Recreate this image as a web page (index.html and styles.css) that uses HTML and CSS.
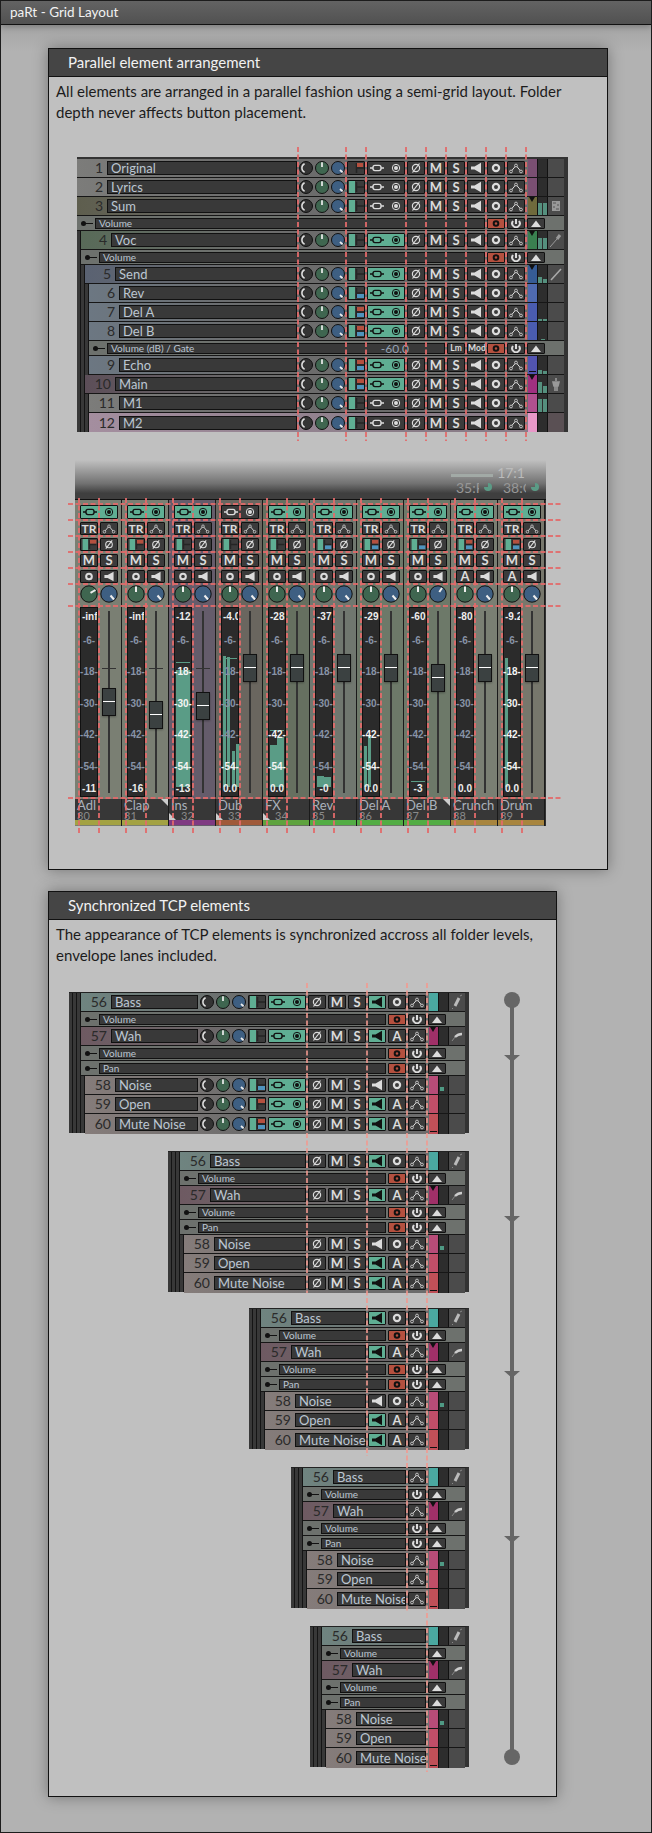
FILE: index.html
```
<!DOCTYPE html>
<html lang="en">
<head>
<meta charset="utf-8">
<title>paRt - Grid Layout</title>
<link rel="stylesheet" href="styles.css">
</head>
<body>
<svg class="defs" aria-hidden="true">
<symbol id="ks" viewBox="0 0 46 14"><circle cx="7" cy="7" r="6.5" fill="#343434" stroke="#111"/><path d="M5.6 2.8A4.6 4.6 0 0 0 5.6 11.2" fill="none" stroke="#ddd" stroke-width="1.5"/><circle cx="23" cy="7" r="6.5" fill="#3f6650" stroke="#111"/><path d="M23 1.2V6" stroke="#eee" stroke-width="1.7"/><circle cx="39" cy="7" r="6.5" fill="#3e5f82" stroke="#111"/><path d="M41 9L43.6 11.4" stroke="#eee" stroke-width="1.8"/></symbol>
<symbol id="kg" viewBox="0 0 18 18"><circle cx="9" cy="9" r="8.2" fill="#3f6650" stroke="#111"/><path d="M9 1.5V7" stroke="#eee" stroke-width="2"/></symbol>
<symbol id="kr" viewBox="0 0 18 18"><circle cx="9" cy="9" r="8.2" fill="#3f6650" stroke="#111"/><path d="M10.5 7.8L15.5 5" stroke="#eee" stroke-width="2"/></symbol>
<symbol id="kb" viewBox="0 0 18 18"><circle cx="9" cy="9" r="8.2" fill="#3e5f82" stroke="#111"/><path d="M10.5 10.5L14 14.5" stroke="#eee" stroke-width="2"/></symbol>
<symbol id="ku" viewBox="0 0 18 18"><circle cx="9" cy="9" r="8.2" fill="#3e5f82" stroke="#111"/><path d="M10.3 7L13 3" stroke="#eee" stroke-width="2"/></symbol>
<symbol id="ph" viewBox="0 0 16 12"><circle cx="8" cy="6" r="3.6" fill="none" stroke="currentColor" stroke-width="1.2"/><path d="M4.5 10.5L11.5 1.5" stroke="currentColor" stroke-width="1.2"/></symbol>
<symbol id="mo" viewBox="0 0 16 12"><path d="M3 4.4H6.5L13 .8V11.2L6.5 7.6H3Z" fill="currentColor"/></symbol>
<symbol id="ring" viewBox="0 0 16 12"><circle cx="8" cy="6" r="3.1" fill="none" stroke="currentColor" stroke-width="2.2"/></symbol>
<symbol id="ev" viewBox="0 0 16 12"><path d="M3 9.5L8 3.5L13 9.5" fill="none" stroke="currentColor"/><circle cx="3" cy="9.5" r="1.4" fill="#3b3b3b" stroke="currentColor" stroke-width=".8"/><circle cx="8" cy="3.5" r="1.4" fill="#3b3b3b" stroke="currentColor" stroke-width=".8"/><circle cx="13" cy="9.5" r="1.4" fill="#3b3b3b" stroke="currentColor" stroke-width=".8"/></symbol>
<symbol id="io" viewBox="0 0 36 12"><path d="M2 6H5M13 6H16" stroke="currentColor" stroke-width="1.4"/><rect x="5" y="3.4" width="8" height="5.2" rx="2" fill="none" stroke="currentColor" stroke-width="1.4"/><circle cx="28" cy="6" r="3.7" fill="none" stroke="currentColor"/><circle cx="28" cy="6" r="2" fill="currentColor"/></symbol>
<symbol id="r0" viewBox="0 0 16 12"><path d="M8 6H16M8.5 1V11" stroke="#252525" stroke-width="1.6"/><rect x="9" y="1" width="6" height="4" fill="#b4503f"/></symbol>
<symbol id="r1" viewBox="0 0 16 12"><rect x="1" y="0" width="6" height="12" fill="#5fae93"/><path d="M8 6H16M8.5 1V11" stroke="#252525" stroke-width="1.6"/></symbol>
<symbol id="r2" viewBox="0 0 16 12"><rect x="1" y="0" width="6" height="12" fill="#5fae93"/><path d="M8 6H16M8.5 1V11" stroke="#252525" stroke-width="1.6"/><rect x="9" y="7" width="7" height="4" fill="#4f93bd"/></symbol>
<symbol id="r3" viewBox="0 0 16 12"><rect x="1" y="0" width="6" height="12" fill="#5fae93"/><path d="M8 6H16M8.5 1V11" stroke="#252525" stroke-width="1.6"/><rect x="9" y="1" width="7" height="4" fill="#b4503f"/></symbol>
<symbol id="r4" viewBox="0 0 16 12"><rect x="1" y="0" width="6" height="12" fill="#5fae93"/><path d="M8 6H16M8.5 1V11" stroke="#252525" stroke-width="1.6"/><rect x="9" y="1" width="7" height="4" fill="#b4503f"/><rect x="9" y="7" width="7" height="4" fill="#4f93bd"/></symbol>
<symbol id="ro" viewBox="0 0 16 9"><circle cx="8" cy="4.5" r="2.3" fill="none" stroke="#111" stroke-width="2"/></symbol>
<symbol id="pw" viewBox="0 0 16 9"><path d="M5 2A3.8 3.8 0 1 0 11 2" fill="none" stroke="currentColor" stroke-width="2"/><path d="M8 0V5" stroke="currentColor" stroke-width="2"/></symbol>
<symbol id="up" viewBox="0 0 16 9"><path d="M3 8L8 1.5L13 8Z" fill="currentColor"/></symbol>
<symbol id="fa" viewBox="0 0 16 18"><rect x="4" y="4" width="8" height="10" fill="#999"/><path d="M5 6H8M9 8H11M5 10H7M8 12H11" stroke="#555"/></symbol>
<symbol id="fb" viewBox="0 0 16 18"><path d="M2 16L9 8" stroke="#999" stroke-width="1"/><path d="M9 8L12 4" stroke="#999" stroke-width="3"/></symbol>
<symbol id="fc" viewBox="0 0 16 18"><path d="M3 15L13 4" stroke="#aaa" stroke-width="1.6"/></symbol>
<symbol id="fd" viewBox="0 0 16 18"><path d="M8 3V6M5 7H11L10 11H6ZM7 11V16M9 11V16" stroke="#999" stroke-width="1.6" fill="#999"/></symbol>
<symbol id="fe" viewBox="0 0 16 18"><path d="M10 5L6 13" stroke="#bbb" stroke-width="3"/><path d="M11 3L13 2M4 15L3 16" stroke="#888"/></symbol>
<symbol id="ff" viewBox="0 0 16 18"><path d="M3 14L6 10" stroke="#888"/><path d="M6 10C9 7 11 7 13 7" stroke="#ccc" stroke-width="2.4" fill="none"/></symbol>
</svg>

<div class="page">
<header class="top">paRt - Grid Layout</header>

<section class="panel p1">
<h2>Parallel element arrangement</h2>
<p>All elements are arranged in a parallel fashion using a semi-grid layout. Folder depth never affects button placement.</p>

<div class="tcp t1">
<div class="r tg"><span class="n">1</span><span class="nm">Original</span><svg class="ks"><use href="#ks"/></svg><svg class="b"><use href="#r0"/></svg><svg class="b w"><use href="#io"/></svg><svg class="b"><use href="#ph"/></svg><b class="b">M</b><b class="b">S</b><svg class="b"><use href="#mo"/></svg><svg class="b"><use href="#ring"/></svg><svg class="b"><use href="#ev"/></svg><span class="tail"><i class="c ca"></i><i class="mt"></i><i class="fx"></i></span></div>
<div class="r tg"><span class="n">2</span><span class="nm">Lyrics</span><svg class="ks"><use href="#ks"/></svg><svg class="b"><use href="#r1"/></svg><svg class="b w"><use href="#io"/></svg><svg class="b"><use href="#ph"/></svg><b class="b">M</b><b class="b">S</b><svg class="b"><use href="#mo"/></svg><svg class="b"><use href="#ring"/></svg><svg class="b"><use href="#ev"/></svg><span class="tail"><i class="c ca"></i><i class="mt"></i><i class="fx"></i></span></div>
<div class="r to"><span class="n">3</span><span class="nm">Sum</span><svg class="ks"><use href="#ks"/></svg><svg class="b"><use href="#r1"/></svg><svg class="b w"><use href="#io"/></svg><svg class="b"><use href="#ph"/></svg><b class="b">M</b><b class="b">S</b><svg class="b"><use href="#mo"/></svg><svg class="b"><use href="#ring"/></svg><svg class="b"><use href="#ev"/></svg><span class="tail"><i class="c cb fo"></i><i class="mt"><u style="height:12px"></u><u style="height:12px"></u></i><i class="fx"><svg><use href="#fa"/></svg></i></span></div>
<div class="e"><i class="pin"></i><span class="box">Volume</span><svg class="b red"><use href="#ro"/></svg><svg class="b"><use href="#pw"/></svg><svg class="b"><use href="#up"/></svg></div>
<div class="r d1 tv"><span class="n">4</span><span class="nm">Voc</span><svg class="ks"><use href="#ks"/></svg><svg class="b"><use href="#r1"/></svg><svg class="b w on"><use href="#io"/></svg><svg class="b"><use href="#ph"/></svg><b class="b">M</b><b class="b">S</b><svg class="b"><use href="#mo"/></svg><svg class="b"><use href="#ring"/></svg><svg class="b"><use href="#ev"/></svg><span class="tail"><i class="c cc fo"></i><i class="mt"><u style="height:11px"></u><u style="height:11px"></u></i><i class="fx"><svg><use href="#fb"/></svg></i></span></div>
<div class="e d1"><i class="pin"></i><span class="box">Volume</span><svg class="b red"><use href="#ro"/></svg><svg class="b"><use href="#pw"/></svg><svg class="b"><use href="#up"/></svg></div>
<div class="r d2 ts"><span class="n">5</span><span class="nm">Send</span><svg class="ks"><use href="#ks"/></svg><svg class="b"><use href="#r1"/></svg><svg class="b w on"><use href="#io"/></svg><svg class="b"><use href="#ph"/></svg><b class="b">M</b><b class="b">S</b><svg class="b"><use href="#mo"/></svg><svg class="b"><use href="#ring"/></svg><svg class="b"><use href="#ev"/></svg><span class="tail"><i class="c cd fo"></i><i class="mt"><u style="height:6px"></u><u style="height:4px"></u></i><i class="fx"><svg><use href="#fc"/></svg></i></span></div>
<div class="r d3 tb"><span class="n">6</span><span class="nm">Rev</span><svg class="ks"><use href="#ks"/></svg><svg class="b"><use href="#r2"/></svg><svg class="b w on"><use href="#io"/></svg><svg class="b"><use href="#ph"/></svg><b class="b">M</b><b class="b">S</b><svg class="b"><use href="#mo"/></svg><svg class="b"><use href="#ring"/></svg><svg class="b"><use href="#ev"/></svg><span class="tail"><i class="c ce"></i><i class="mt"></i><i class="fx"></i></span></div>
<div class="r d3 tb"><span class="n">7</span><span class="nm">Del A</span><svg class="ks"><use href="#ks"/></svg><svg class="b"><use href="#r4"/></svg><svg class="b w on"><use href="#io"/></svg><svg class="b"><use href="#ph"/></svg><b class="b">M</b><b class="b">S</b><svg class="b"><use href="#mo"/></svg><svg class="b"><use href="#ring"/></svg><svg class="b"><use href="#ev"/></svg><span class="tail"><i class="c cf"></i><i class="mt"><u style="height:2px"></u><u style="height:2px"></u></i><i class="fx"></i></span></div>
<div class="r d3 tb"><span class="n">8</span><span class="nm">Del B</span><svg class="ks"><use href="#ks"/></svg><svg class="b"><use href="#r4"/></svg><svg class="b w on"><use href="#io"/></svg><svg class="b"><use href="#ph"/></svg><b class="b">M</b><b class="b">S</b><svg class="b"><use href="#mo"/></svg><svg class="b"><use href="#ring"/></svg><svg class="b"><use href="#ev"/></svg><span class="tail"><i class="c cf"></i><i class="mt"><u style="height:1px"></u></i><i class="fx"></i></span></div>
<div class="e d3"><i class="pin"></i><span class="box">Volume (dB) / Gate<em>-60.0</em></span><b class="b s">Lm</b><b class="b s">Mod</b><svg class="b red"><use href="#ro"/></svg><svg class="b"><use href="#pw"/></svg><svg class="b"><use href="#up"/></svg></div>
<div class="r d3 tb"><span class="n">9</span><span class="nm">Echo</span><svg class="ks"><use href="#ks"/></svg><svg class="b"><use href="#r4"/></svg><svg class="b w on"><use href="#io"/></svg><svg class="b"><use href="#ph"/></svg><b class="b">M</b><b class="b">S</b><svg class="b"><use href="#mo"/></svg><svg class="b"><use href="#ring"/></svg><svg class="b"><use href="#ev"/></svg><span class="tail"><i class="c cg ln"></i><i class="mt"><u style="height:4px"></u><u style="height:3px"></u></i><i class="fx"></i></span></div>
<div class="r d2 tm"><span class="n">10</span><span class="nm">Main</span><svg class="ks"><use href="#ks"/></svg><svg class="b"><use href="#r4"/></svg><svg class="b w on"><use href="#io"/></svg><svg class="b"><use href="#ph"/></svg><b class="b">M</b><b class="b">S</b><svg class="b"><use href="#mo"/></svg><svg class="b"><use href="#ring"/></svg><svg class="b"><use href="#ev"/></svg><span class="tail"><i class="c ch fo"></i><i class="mt"><u style="height:11px"></u><u style="height:7px"></u></i><i class="fx"><svg><use href="#fd"/></svg></i></span></div>
<div class="r d3 tg"><span class="n">11</span><span class="nm">M1</span><svg class="ks"><use href="#ks"/></svg><svg class="b"><use href="#r1"/></svg><svg class="b w"><use href="#io"/></svg><svg class="b"><use href="#ph"/></svg><b class="b">M</b><b class="b">S</b><svg class="b"><use href="#mo"/></svg><svg class="b"><use href="#ring"/></svg><svg class="b"><use href="#ev"/></svg><span class="tail"><i class="c ci"></i><i class="mt"><u style="height:13px"></u><u style="height:13px"></u></i><i class="fx"></i></span></div>
<div class="r d3 tp last"><span class="n">12</span><span class="nm">M2</span><svg class="ks"><use href="#ks"/></svg><svg class="b"><use href="#r1"/></svg><svg class="b w"><use href="#io"/></svg><svg class="b"><use href="#ph"/></svg><b class="b">M</b><b class="b">S</b><svg class="b"><use href="#mo"/></svg><svg class="b"><use href="#ring"/></svg><svg class="b"><use href="#ev"/></svg><span class="tail"><i class="c cj"></i><i class="mt"></i><i class="fx fp"></i></span></div>
</div>

<div class="mixtop"><i class="fbar"></i><span class="faint">17:1</span><span class="tc"><span class="cl">35:F</span><i></i></span><span class="tc"><span class="cl">38:C</span><i></i></span></div>
<div class="mixer">

<div class="st s1"><svg class="b w on"><use href="#io"/></svg><b class="b sm">TR</b><svg class="b"><use href="#ev"/></svg><svg class="b"><use href="#r3"/></svg><svg class="b"><use href="#ph"/></svg><b class="b">M</b><b class="b">S</b><svg class="b"><use href="#ring"/></svg><svg class="b"><use href="#mo"/></svg><span class="kn"><svg><use href="#kr"/></svg><svg><use href="#kb"/></svg></span>
<div class="m"><strong>-inf</strong><i>-6-</i><i>-18-</i><i>-30-</i><i>-42-</i><i>-54-</i><strong class="bt">-11</strong></div><div class="f"><span class="cap" style="top:81px"></span></div>
<div class="lab"><b>Adl</b><small>30</small></div><div class="cb1 y1"></div></div>

<div class="st s1"><svg class="b w on"><use href="#io"/></svg><b class="b sm">TR</b><svg class="b"><use href="#ev"/></svg><svg class="b"><use href="#r3"/></svg><svg class="b"><use href="#ph"/></svg><b class="b">M</b><b class="b">S</b><svg class="b"><use href="#ring"/></svg><svg class="b"><use href="#mo"/></svg><span class="kn"><svg><use href="#kg"/></svg><svg><use href="#kb"/></svg></span>
<div class="m"><strong>-inf</strong><i>-6-</i><i>-18-</i><i>-30-</i><i>-42-</i><i>-54-</i><strong class="bt">-16</strong></div><div class="f"><span class="cap" style="top:94px"></span></div>
<div class="lab tr"><b>Clap</b><small>31</small></div><div class="cb1 y1"></div></div>

<div class="st s2"><svg class="b w on"><use href="#io"/></svg><b class="b sm">TR</b><svg class="b"><use href="#ev"/></svg><svg class="b"><use href="#r1"/></svg><svg class="b"><use href="#ph"/></svg><b class="b">M</b><b class="b">S</b><svg class="b"><use href="#ring"/></svg><svg class="b"><use href="#mo"/></svg><span class="kn"><svg><use href="#kg"/></svg><svg><use href="#kb"/></svg></span>
<div class="m"><u class="gl" style="height:117px"></u><u class="gr" style="height:117px"></u><u class="pk" style="bottom:133px"></u><strong>-12.</strong><i>-6-</i><i class="h">-18-</i><i class="h">-30-</i><i class="h">-42-</i><i class="h">-54-</i><strong class="bt">-13</strong></div><div class="f"><span class="cap" style="top:85px"></span></div>
<div class="lab bl"><b>Ins</b><small>32</small></div><div class="cb1 y2"></div></div>

<div class="st s3"><svg class="b w"><use href="#io"/></svg><b class="b sm">TR</b><svg class="b"><use href="#ev"/></svg><svg class="b"><use href="#r1"/></svg><svg class="b"><use href="#ph"/></svg><b class="b">M</b><b class="b">S</b><svg class="b"><use href="#ring"/></svg><svg class="b"><use href="#mo"/></svg><span class="kn"><svg><use href="#kg"/></svg><svg><use href="#kb"/></svg></span>
<div class="m"><u class="g4" style="left:1px;height:131px"></u><u class="g4" style="left:5px;height:130px"></u><u class="g4" style="left:10px;height:36px"></u><u class="g4" style="left:14px;height:43px"></u><u class="pk" style="bottom:137px"></u><strong>-4.0</strong><i>-6-</i><i>-18-</i><i>-30-</i><i>-42-</i><i class="h">-54-</i><strong class="bt bx">0.0</strong></div><div class="f"><span class="cap" style="top:47px"></span></div>
<div class="lab bl"><b>Dub</b><small>33</small></div><div class="cb1 y3"></div></div>

<div class="st s4"><svg class="b w on"><use href="#io"/></svg><b class="b sm">TR</b><svg class="b"><use href="#ev"/></svg><svg class="b"><use href="#r1"/></svg><svg class="b"><use href="#ph"/></svg><b class="b">M</b><b class="b">S</b><svg class="b"><use href="#ring"/></svg><svg class="b"><use href="#mo"/></svg><span class="kn"><svg><use href="#kg"/></svg><svg><use href="#kb"/></svg></span>
<div class="m"><u class="gl" style="height:42px"></u><u class="gr" style="height:50px"></u><u class="pk" style="bottom:65px"></u><strong>-28.</strong><i>-6-</i><i>-18-</i><i>-30-</i><i class="h">-42-</i><i class="h">-54-</i><strong class="bt bx">0.0</strong></div><div class="f"><span class="cap" style="top:47px"></span></div>
<div class="lab bl"><b>FX</b><small>34</small></div><div class="cb1 y4"></div></div>

<div class="st s5"><svg class="b w on"><use href="#io"/></svg><b class="b sm">TR</b><svg class="b"><use href="#ev"/></svg><svg class="b"><use href="#r2"/></svg><svg class="b"><use href="#ph"/></svg><b class="b">M</b><b class="b">S</b><svg class="b"><use href="#ring"/></svg><svg class="b"><use href="#mo"/></svg><span class="kn"><svg><use href="#kg"/></svg><svg><use href="#kb"/></svg></span>
<div class="m"><u class="gl" style="height:11px"></u><u class="gr" style="height:10px"></u><strong>-37.</strong><i>-6-</i><i>-18-</i><i>-30-</i><i>-42-</i><i>-54-</i><strong class="bt">-0</strong></div><div class="f"><span class="cap" style="top:47px"></span></div>
<div class="lab"><b>Rev</b><small>35</small></div><div class="cb1 y5"></div></div>

<div class="st s6"><svg class="b w on"><use href="#io"/></svg><b class="b sm">TR</b><svg class="b"><use href="#ev"/></svg><svg class="b"><use href="#r4"/></svg><svg class="b"><use href="#ph"/></svg><b class="b">M</b><b class="b">S</b><svg class="b"><use href="#ring"/></svg><svg class="b"><use href="#mo"/></svg><span class="kn"><svg><use href="#kg"/></svg><svg><use href="#kb"/></svg></span>
<div class="m"><u class="g4" style="left:1px;height:41px"></u><u class="g4" style="left:5px;height:52px"></u><strong>-29.</strong><i>-6-</i><i>-18-</i><i>-30-</i><i class="h">-42-</i><i class="h">-54-</i><strong class="bt bx">0.0</strong></div><div class="f"><span class="cap" style="top:47px"></span></div>
<div class="lab"><b>Del A</b><small>36</small></div><div class="cb1 y5"></div></div>

<div class="st s6"><svg class="b w on"><use href="#io"/></svg><b class="b sm">TR</b><svg class="b"><use href="#ev"/></svg><svg class="b"><use href="#r2"/></svg><svg class="b"><use href="#ph"/></svg><b class="b">M</b><b class="b">S</b><svg class="b"><use href="#ring"/></svg><svg class="b"><use href="#mo"/></svg><span class="kn"><svg><use href="#kg"/></svg><svg><use href="#ku"/></svg></span>
<div class="m"><u class="pk" style="bottom:14px"></u><strong>-60.</strong><i>-6-</i><i>-18-</i><i>-30-</i><i>-42-</i><i>-54-</i><strong class="bt">-3</strong></div><div class="f"><span class="cap" style="top:57px"></span></div>
<div class="lab tr"><b>Del B</b><small>37</small></div><div class="cb1 y5"></div></div>

<div class="st s1"><svg class="b w on"><use href="#io"/></svg><b class="b sm">TR</b><svg class="b"><use href="#ev"/></svg><svg class="b"><use href="#r4"/></svg><svg class="b"><use href="#ph"/></svg><b class="b">M</b><b class="b">S</b><b class="b">A</b><svg class="b"><use href="#mo"/></svg><span class="kn"><svg><use href="#kg"/></svg><svg><use href="#kb"/></svg></span>
<div class="m"><strong>-80.</strong><i>-6-</i><i>-18-</i><i>-30-</i><i>-42-</i><i>-54-</i><strong class="bt bx">0.0</strong></div><div class="f"><span class="cap" style="top:47px"></span></div>
<div class="lab"><b>Crunch</b><small>38</small></div><div class="cb1 y6"></div></div>

<div class="st s7"><svg class="b w on"><use href="#io"/></svg><b class="b sm">TR</b><svg class="b"><use href="#ev"/></svg><svg class="b"><use href="#r4"/></svg><svg class="b"><use href="#ph"/></svg><b class="b">M</b><b class="b">S</b><b class="b">A</b><svg class="b"><use href="#mo"/></svg><span class="kn"><svg><use href="#kg"/></svg><svg><use href="#kb"/></svg></span>
<div class="m"><u class="g4" style="left:1px;height:129px"></u><u class="pk" style="bottom:135px;right:12px"></u><strong>-9.2</strong><i>-6-</i><i class="h">-18-</i><i class="h">-30-</i><i class="h">-42-</i><i class="h">-54-</i><strong class="bt bx">0.0</strong></div><div class="f"><span class="cap" style="top:47px"></span></div>
<div class="lab"><b>Drum</b><small>39</small></div><div class="cb1 y6"></div></div>
</div>
</section>

<section class="panel p2">
<h2>Synchronized TCP elements</h2>
<p>The appearance of TCP elements is synchronized accross all folder levels, envelope lanes included.</p>
<div class="sync">

<div class="tcp t2 w1">
<div class="r d3 tb2"><span class="n">56</span><span class="nm">Bass</span><svg class="ks"><use href="#ks"/></svg><svg class="b"><use href="#r1"/></svg><svg class="b w on"><use href="#io"/></svg><svg class="b"><use href="#ph"/></svg><b class="b">M</b><b class="b">S</b><svg class="b on"><use href="#mo"/></svg><svg class="b"><use href="#ring"/></svg><svg class="b"><use href="#ev"/></svg><span class="tail"><i class="c c56"></i><i class="mt"></i><i class="fx"><svg><use href="#fe"/></svg></i></span></div>
<div class="e d3"><i class="pin"></i><span class="box">Volume</span><svg class="b red"><use href="#ro"/></svg><svg class="b"><use href="#pw"/></svg><svg class="b"><use href="#up"/></svg></div>
<div class="r d3 tw"><span class="n">57</span><span class="nm">Wah</span><svg class="ks"><use href="#ks"/></svg><svg class="b"><use href="#r1"/></svg><svg class="b w on"><use href="#io"/></svg><svg class="b"><use href="#ph"/></svg><b class="b">M</b><b class="b">S</b><svg class="b on"><use href="#mo"/></svg><b class="b">A</b><svg class="b"><use href="#ev"/></svg><span class="tail"><i class="c c57 fo"></i><i class="mt"></i><i class="fx"><svg><use href="#ff"/></svg></i></span></div>
<div class="e d3"><i class="pin"></i><span class="box">Volume</span><svg class="b red"><use href="#ro"/></svg><svg class="b"><use href="#pw"/></svg><svg class="b"><use href="#up"/></svg></div>
<div class="e d3"><i class="pin"></i><span class="box">Pan</span><svg class="b red"><use href="#ro"/></svg><svg class="b"><use href="#pw"/></svg><svg class="b"><use href="#up"/></svg></div>
<div class="r d4 tn"><span class="n">58</span><span class="nm">Noise</span><svg class="ks"><use href="#ks"/></svg><svg class="b"><use href="#r2"/></svg><svg class="b w on"><use href="#io"/></svg><svg class="b"><use href="#ph"/></svg><b class="b">M</b><b class="b">S</b><svg class="b"><use href="#mo"/></svg><svg class="b"><use href="#ring"/></svg><svg class="b"><use href="#ev"/></svg><span class="tail"><i class="c c58"></i><i class="mt dot"></i><i class="fx"></i></span></div>
<div class="r d4 tn"><span class="n">59</span><span class="nm">Open</span><svg class="ks"><use href="#ks"/></svg><svg class="b"><use href="#r3"/></svg><svg class="b w on"><use href="#io"/></svg><svg class="b"><use href="#ph"/></svg><b class="b">M</b><b class="b">S</b><svg class="b on"><use href="#mo"/></svg><b class="b">A</b><svg class="b"><use href="#ev"/></svg><span class="tail"><i class="c c59"></i><i class="mt"></i><i class="fx"></i></span></div>
<div class="r d4 tn last"><span class="n">60</span><span class="nm">Mute Noise</span><svg class="ks"><use href="#ks"/></svg><svg class="b"><use href="#r4"/></svg><svg class="b w on"><use href="#io"/></svg><svg class="b"><use href="#ph"/></svg><b class="b">M</b><b class="b">S</b><svg class="b on"><use href="#mo"/></svg><b class="b">A</b><svg class="b"><use href="#ev"/></svg><span class="tail"><i class="c c60 ln"></i><i class="mt"></i><i class="fx"></i></span></div>
</div>

<div class="tcp t2 w2">
<div class="r d3 tb2"><span class="n">56</span><span class="nm">Bass</span><svg class="b"><use href="#ph"/></svg><b class="b">M</b><b class="b">S</b><svg class="b on"><use href="#mo"/></svg><svg class="b"><use href="#ring"/></svg><svg class="b"><use href="#ev"/></svg><span class="tail"><i class="c c56"></i><i class="mt"></i><i class="fx"><svg><use href="#fe"/></svg></i></span></div>
<div class="e d3"><i class="pin"></i><span class="box">Volume</span><svg class="b red"><use href="#ro"/></svg><svg class="b"><use href="#pw"/></svg><svg class="b"><use href="#up"/></svg></div>
<div class="r d3 tw"><span class="n">57</span><span class="nm">Wah</span><svg class="b"><use href="#ph"/></svg><b class="b">M</b><b class="b">S</b><svg class="b on"><use href="#mo"/></svg><b class="b">A</b><svg class="b"><use href="#ev"/></svg><span class="tail"><i class="c c57 fo"></i><i class="mt"></i><i class="fx"><svg><use href="#ff"/></svg></i></span></div>
<div class="e d3"><i class="pin"></i><span class="box">Volume</span><svg class="b red"><use href="#ro"/></svg><svg class="b"><use href="#pw"/></svg><svg class="b"><use href="#up"/></svg></div>
<div class="e d3"><i class="pin"></i><span class="box">Pan</span><svg class="b red"><use href="#ro"/></svg><svg class="b"><use href="#pw"/></svg><svg class="b"><use href="#up"/></svg></div>
<div class="r d4 tn"><span class="n">58</span><span class="nm">Noise</span><svg class="b"><use href="#ph"/></svg><b class="b">M</b><b class="b">S</b><svg class="b"><use href="#mo"/></svg><svg class="b"><use href="#ring"/></svg><svg class="b"><use href="#ev"/></svg><span class="tail"><i class="c c58"></i><i class="mt dot"></i><i class="fx"></i></span></div>
<div class="r d4 tn"><span class="n">59</span><span class="nm">Open</span><svg class="b"><use href="#ph"/></svg><b class="b">M</b><b class="b">S</b><svg class="b on"><use href="#mo"/></svg><b class="b">A</b><svg class="b"><use href="#ev"/></svg><span class="tail"><i class="c c59"></i><i class="mt"></i><i class="fx"></i></span></div>
<div class="r d4 tn last"><span class="n">60</span><span class="nm">Mute Noise</span><svg class="b"><use href="#ph"/></svg><b class="b">M</b><b class="b">S</b><svg class="b on"><use href="#mo"/></svg><b class="b">A</b><svg class="b"><use href="#ev"/></svg><span class="tail"><i class="c c60 ln"></i><i class="mt"></i><i class="fx"></i></span></div>
</div>

<div class="tcp t2 w3">
<div class="r d3 tb2"><span class="n">56</span><span class="nm">Bass</span><svg class="b on"><use href="#mo"/></svg><svg class="b"><use href="#ring"/></svg><svg class="b"><use href="#ev"/></svg><span class="tail"><i class="c c56"></i><i class="mt"></i><i class="fx"><svg><use href="#fe"/></svg></i></span></div>
<div class="e d3"><i class="pin"></i><span class="box">Volume</span><svg class="b red"><use href="#ro"/></svg><svg class="b"><use href="#pw"/></svg><svg class="b"><use href="#up"/></svg></div>
<div class="r d3 tw"><span class="n">57</span><span class="nm">Wah</span><svg class="b on"><use href="#mo"/></svg><b class="b">A</b><svg class="b"><use href="#ev"/></svg><span class="tail"><i class="c c57 fo"></i><i class="mt"></i><i class="fx"><svg><use href="#ff"/></svg></i></span></div>
<div class="e d3"><i class="pin"></i><span class="box">Volume</span><svg class="b red"><use href="#ro"/></svg><svg class="b"><use href="#pw"/></svg><svg class="b"><use href="#up"/></svg></div>
<div class="e d3"><i class="pin"></i><span class="box">Pan</span><svg class="b red"><use href="#ro"/></svg><svg class="b"><use href="#pw"/></svg><svg class="b"><use href="#up"/></svg></div>
<div class="r d4 tn"><span class="n">58</span><span class="nm">Noise</span><svg class="b"><use href="#mo"/></svg><svg class="b"><use href="#ring"/></svg><svg class="b"><use href="#ev"/></svg><span class="tail"><i class="c c58"></i><i class="mt dot"></i><i class="fx"></i></span></div>
<div class="r d4 tn"><span class="n">59</span><span class="nm">Open</span><svg class="b on"><use href="#mo"/></svg><b class="b">A</b><svg class="b"><use href="#ev"/></svg><span class="tail"><i class="c c59"></i><i class="mt"></i><i class="fx"></i></span></div>
<div class="r d4 tn last"><span class="n">60</span><span class="nm">Mute Noise</span><svg class="b on"><use href="#mo"/></svg><b class="b">A</b><svg class="b"><use href="#ev"/></svg><span class="tail"><i class="c c60 ln"></i><i class="mt"></i><i class="fx"></i></span></div>
</div>

<div class="tcp t2 w4">
<div class="r d3 tb2"><span class="n">56</span><span class="nm">Bass</span><svg class="b"><use href="#ev"/></svg><span class="tail"><i class="c c56"></i><i class="mt"></i><i class="fx"><svg><use href="#fe"/></svg></i></span></div>
<div class="e d3"><i class="pin"></i><span class="box">Volume</span><svg class="b"><use href="#pw"/></svg><svg class="b"><use href="#up"/></svg></div>
<div class="r d3 tw"><span class="n">57</span><span class="nm">Wah</span><svg class="b"><use href="#ev"/></svg><span class="tail"><i class="c c57 fo"></i><i class="mt"></i><i class="fx"><svg><use href="#ff"/></svg></i></span></div>
<div class="e d3"><i class="pin"></i><span class="box">Volume</span><svg class="b"><use href="#pw"/></svg><svg class="b"><use href="#up"/></svg></div>
<div class="e d3"><i class="pin"></i><span class="box">Pan</span><svg class="b"><use href="#pw"/></svg><svg class="b"><use href="#up"/></svg></div>
<div class="r d4 tn"><span class="n">58</span><span class="nm">Noise</span><svg class="b"><use href="#ev"/></svg><span class="tail"><i class="c c58"></i><i class="mt dot"></i><i class="fx"></i></span></div>
<div class="r d4 tn"><span class="n">59</span><span class="nm">Open</span><svg class="b"><use href="#ev"/></svg><span class="tail"><i class="c c59"></i><i class="mt"></i><i class="fx"></i></span></div>
<div class="r d4 tn last"><span class="n">60</span><span class="nm cut">Mute Noise</span><svg class="b"><use href="#ev"/></svg><span class="tail"><i class="c c60 ln"></i><i class="mt"></i><i class="fx"></i></span></div>
</div>

<div class="tcp t2 w5">
<div class="r d3 tb2"><span class="n">56</span><span class="nm">Bass</span><span class="tail"><i class="c c56"></i><i class="mt"></i><i class="fx"><svg><use href="#fe"/></svg></i></span></div>
<div class="e d3"><i class="pin"></i><span class="box">Volume</span><svg class="b"><use href="#up"/></svg></div>
<div class="r d3 tw"><span class="n">57</span><span class="nm">Wah</span><span class="tail"><i class="c c57 fo"></i><i class="mt"></i><i class="fx"><svg><use href="#ff"/></svg></i></span></div>
<div class="e d3"><i class="pin"></i><span class="box">Volume</span><svg class="b"><use href="#up"/></svg></div>
<div class="e d3"><i class="pin"></i><span class="box">Pan</span><svg class="b"><use href="#up"/></svg></div>
<div class="r d4 tn"><span class="n">58</span><span class="nm">Noise</span><span class="tail"><i class="c c58"></i><i class="mt dot"></i><i class="fx"></i></span></div>
<div class="r d4 tn"><span class="n">59</span><span class="nm">Open</span><span class="tail"><i class="c c59"></i><i class="mt"></i><i class="fx"></i></span></div>
<div class="r d4 tn last"><span class="n">60</span><span class="nm">Mute Noise</span><span class="tail"><i class="c c60 ln"></i><i class="mt"></i><i class="fx"></i></span></div>
</div>
</div>
</section>

<svg class="over" viewBox="0 0 652 1833" aria-hidden="true">
<path class="d-a" d="M298 147V441M346 147V441M366 147V441M406 147V441M426 147V441M446 147V441M466 147V441M486 147V441M506 147V441M526 147V441"/>
<path class="d-a" d="M68 504H563M68 520H563M68 536H563M68 552H563M68 568H563M68 584H563M68 606H563M68 798H563"/>
<path class="d-a" d="M79 498V834M99 498V834M126 498V834M146 498V834M173 498V834M193 498V834M220 498V834M240 498V834M267 498V834M287 498V834M314 498V834M334 498V834M361 498V834M381 498V834M408 498V834M428 498V834M455 498V834M475 498V834M502 498V834M522 498V834"/>
<path class="d-b" d="M307 983V1293M367 983V1456M407 983V1612M427 983V1772"/>
<path class="tl" d="M512 1000V1757"/>
<circle class="tn-c" cx="512" cy="1000" r="8"/><circle class="tn-c" cx="512" cy="1757" r="8"/>
<path class="tn-c" d="M504 1055H520L512 1062ZM504 1216H520L512 1223ZM504 1371H520L512 1378ZM504 1536H520L512 1543Z"/>
</svg>
</div>
</body>
</html>
```
FILE: styles.css
```
*{box-sizing:border-box}
html,body{margin:0;padding:0}
body{width:652px;background:#aeaeae}
.defs{position:absolute;width:0;height:0}
.page{position:relative;width:652px;height:1833px;overflow:hidden;border:1px solid #1c1c1c;background:linear-gradient(#989898,#b2b2b2 50px);font-family:"Lato","Liberation Sans",sans-serif;color:#1c1c1c}
.top{height:24px;background:linear-gradient(#636363,#515151);border-bottom:1px solid #111;color:#f2f2f2;font-size:13.5px;line-height:23px;padding-left:9px;box-shadow:0 2px 6px rgba(0,0,0,.25)}
.panel{background:#c0c0c0;border:1px solid #111;margin-left:47px;box-shadow:0 0 14px rgba(0,0,0,.35)}
.p1{width:560px;margin-top:23px;height:822px}
.p2{width:509px;margin-top:21px;height:906px}
h2{margin:0;height:28px;background:#454545;border-bottom:1px solid #111;color:#f2f2f2;font-size:15px;font-weight:400;line-height:27px;padding-left:19px}
p{margin:4px 0 0;padding:0 7px;font-size:15px;line-height:20.5px;height:41px}
.p1 p{padding-right:20px}
.tcp{display:flex;flex-direction:column;border-right:4px solid #333;background:repeating-linear-gradient(90deg,#383838 0 3px,#141414 3px 4px)}
.t1{width:491px;height:275px;margin:35px 0 0 28px;border-top:2px solid #333}
.t2{border-top:1px solid #222;height:141px}
.sync{display:flex;flex-direction:column;align-items:flex-end;gap:18px;width:420px;margin-top:27px}
.w1{width:400px}.w2{width:301px}.w3{width:220px;margin-top:-2px}.w4{width:178px}.w5{width:159px}
.r,.e{display:flex;align-items:center;gap:2px;border-bottom:1px solid #161616;flex:none}
.r{height:19px;background:linear-gradient(90deg,var(--t),#6c6c6c 170px)}
.r.last{border-bottom:0;height:20px}
.t1 .r.last{height:19px}
.e{height:15px;background:#6d716d;padding-right:19px}
.d1{margin-left:4px}.d2{margin-left:8px}.d3{margin-left:12px}.d4{margin-left:16px}
.n{width:28px;text-align:right;padding-right:2px;font-size:14px;line-height:14px;color:#2a2a2a;flex:none}
.nm{flex:1;min-width:0;height:14px;background:#393939;border:1px solid #111;color:#bcc6d2;font-size:13px;line-height:12px;padding-left:3px;white-space:nowrap}
.cut{overflow:hidden}
.ks{width:46px;height:14px;flex:none}
.b{display:block;flex:none;width:18px;height:14px;background:#3b3b3b;border:1px solid #111;border-radius:1px;color:#dcdcdc;text-align:center;font-size:13px;font-weight:700;line-height:12px}
.sm{font-size:12px}
.w{width:38px}
.on{background:#5fae93;color:#111}
.red{background:#b4503f}
.b.s{font-size:8.5px;letter-spacing:.1px;white-space:nowrap}
.e .b{height:11px;line-height:9px}
.tail{display:flex;gap:1px;align-self:stretch;width:36px;margin-left:1px;flex:none;background:#111}
.c{display:block;width:9px;position:relative}
.mt{display:flex;gap:1px;align-items:flex-end;justify-content:center;width:9px;background:#2d2d2d}
.mt u{display:block;width:4px;background:#55907e}
.fx{display:block;width:16px;background:#4b4b4b}
.fx svg{display:block;width:16px;height:18px}
.fp{background:#5a5054}
.fo::after{content:"";position:absolute;left:1px;top:0;border:3.5px solid transparent;border-top:5px solid #111;border-bottom:0}
.ln::after{content:"";position:absolute;left:1px;right:1px;bottom:2px;height:1px;background:#111}
.dot{justify-content:flex-start;position:relative}
.dot::after{content:"";position:absolute;left:1px;bottom:3px;width:4px;height:4px;background:#4f9a84}
.ca{background:#7a4f72}.cb{background:#6f6a3c}.cc{background:#3a8050}.cd{background:#365c96}.ce{background:#4f6ab0}.cf{background:#4a5cb0}.cg{background:#5254b0}.ch{background:#a03080}.ci{background:#b0508f}.cj{background:#e898c8}
.c56{background:#4aa8a0}.c57{background:#a03068}.c58{background:#b84c78}.c59{background:#c04e68}.c60{background:#c05058}
.tg{--t:#7c7c7a}.to{--t:#5e5e4e}.tv{--t:#586a58}.ts{--t:#5a6272}.tb{--t:#6c7782}.tm{--t:#5c4e58}.tp{background:linear-gradient(90deg,#a48e9f,#8a7d88 320px)}
.tb2{--t:#6f8480}.tw{--t:#6e5a62}.tn{--t:#857c7a}
.pin{position:relative;display:block;width:16px;height:1px;flex:none;background:linear-gradient(90deg,transparent 7px,#111 7px)}
.pin::before{content:"";position:absolute;left:4px;top:-2px;width:5px;height:5px;border-radius:50%;background:#111}
.box{flex:1;min-width:0;height:11px;background:#393939;border:1px solid #111;color:#bcc6d2;font-size:10px;line-height:9px;padding-left:3px;display:flex;white-space:nowrap}
.box em{font-style:normal;font-size:12px;color:#95a2b4;margin-left:auto;margin-right:35px}
.mixtop{position:relative;display:flex;justify-content:flex-end;width:471px;height:40px;margin:28px 0 0 26px;background:linear-gradient(#c0c0c0,#727272 60%,#3f3f3f 85%);border-bottom:1px solid #111}
.faint{position:absolute;right:21px;top:5px;color:#bbb;font-size:14px;line-height:16px}
.fbar{position:absolute;right:53px;top:14px;width:42px;height:3px;background:#a2aaa6}
.tc{position:relative;width:47px;height:20px;margin-top:19px;padding-left:4px;color:#979797;font-size:14px;line-height:17px}
.cl{display:block;width:23px;overflow:hidden;white-space:nowrap}
.tc i{position:absolute;left:32px;top:4px;width:8px;height:8px;border-radius:50%;background:conic-gradient(#5b9b86 0 75%,transparent 0)}
.mixer{display:flex;width:471px;margin-left:26px;background:#333}
.st{position:relative;display:grid;grid-template-columns:18px 18px;column-gap:2px;row-gap:3px;align-content:start;width:47px;height:326px;padding:5px 0 0 5px;border-right:1px solid #1a1a1a;background:var(--s)}
.st .b{height:13px;line-height:11px}
.st .w{grid-column:1/3;width:38px;height:14px}
.s1{--s:#7a7f73}.s2{--s:#655c6b}.s3{--s:#6a665f}.s4{--s:#667060}.s5{--s:#70776f}.s6{--s:#6d7969}.s7{--s:#77776c}
.kn{grid-column:1/3;display:flex;gap:2px;height:18px;margin-top:-1px}
.kn svg{display:block;width:18px;height:18px}
.m{position:relative;display:flex;flex-direction:column;align-items:center;width:18px;height:190px;margin-top:1px;background:#2b2b2b;border:1px solid #111;font-family:"Liberation Sans",sans-serif}
.m strong{position:relative;height:17px;color:#eee;font-size:10px;line-height:17px;white-space:nowrap;text-align:left;width:16px;padding-left:1px;overflow:hidden}
.m i{position:relative;height:31.5px;color:#8893a6;font-size:10px;font-weight:700;font-style:normal;line-height:31.5px;white-space:nowrap}
.m i.h{color:#f4f4f4}
.m .bt{height:14px;line-height:14px;margin-top:auto;text-align:center;padding:0}
.gl,.gr,.g4,.pk{position:absolute;display:block;background:#5a9c86}
.gl{left:1px;width:7px;bottom:9px}
.gr{right:1px;width:7px;bottom:9px}
.g4{width:3px;bottom:9px}
.pk{left:1px;right:1px;height:1px}
.f{position:relative;height:190px;margin-top:1px}
.f::before{content:"";position:absolute;left:8px;top:4px;bottom:4px;width:2px;background:#333}
.f::after{content:"";position:absolute;left:2px;top:61px;width:14px;height:1px;background:#333}
.cap{position:absolute;z-index:1;left:2px;width:14px;height:28px;background:#3b4141;border:1px solid #111;box-shadow:0 1px 2px rgba(0,0,0,.3)}
.cap::after{content:"";position:absolute;left:0;right:0;top:12px;height:1px;background:#fff}
.lab{grid-column:1/3;position:relative;margin:-1px 0 0 -5px;width:46px;height:21px;background:#373737}
.lab b{display:block;font-weight:400;font-size:13px;line-height:12px;color:#aab2bc;padding-left:2px;white-space:nowrap}
.lab small{display:block;font-size:11px;line-height:9px;color:#8a8a8a;padding-left:2px}
.tr::after{content:"";position:absolute;right:0;top:0;border-top:7px solid #ccc;border-left:7px solid transparent}
.bl::after{content:"";position:absolute;left:0;bottom:0;border-bottom:7px solid #ccc;border-right:7px solid transparent}
.bl small{padding-left:12px}
.cb1{grid-column:1/3;margin:-3px 0 0 -5px;width:46px;height:5px}
.y1{background:#a3a243}.y2{background:#7f3a82}.y3{background:#a05a3a}.y4{background:#5ea33e}.y5{background:#52ad44}.y6{background:#a8853e}
.over{position:absolute;left:-1px;top:-1px;width:652px;height:1833px;pointer-events:none;z-index:2}
.d-a{fill:none;stroke:#e26a6a;stroke-width:2;stroke-dasharray:5 2.5;opacity:.9}
.d-b{fill:none;stroke:#f29a90;stroke-width:1.6;stroke-dasharray:5 2.5}
.tl{stroke:#666;stroke-width:4;fill:none}
.tn-c{fill:#666}
```
